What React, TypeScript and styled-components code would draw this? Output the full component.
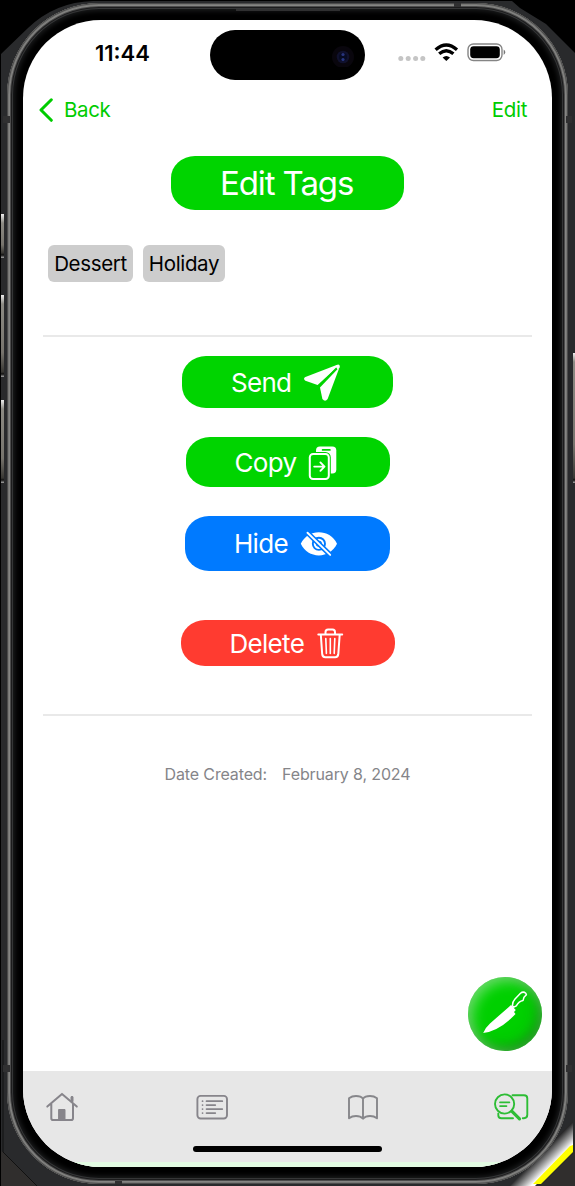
import React from "react";
import styled, { createGlobalStyle } from "styled-components";

const GREEN = "#00d400";

const GlobalStyle = createGlobalStyle`
  * { box-sizing: border-box; }
  body { margin: 0; background: #000; font-family: Inter, "Liberation Sans", sans-serif; }
`;

const Stage = styled.main`
  position: relative;
  width: 575px;
  height: 1186px;
  overflow: hidden;
  background: #000;
`;

const Backdrop = styled.svg`
  position: absolute;
  inset: 0;
`;

const Phone = styled.div`
  position: relative;
  width: 561px;
  height: 1181px;
  margin: 0 0 0 7px;
  top: 3px;
  padding: 17px 16px 16px;
  border-radius: 92px;
  background: #000;
  box-shadow:
    inset 0 0 0 1px #4b4b4b,
    inset 0 0 0 2px #777775,
    inset 0 0 0 3px #858583,
    inset 0 0 0 4px #4c4c4c,
    inset 0 0 0 5px #1c1c1d,
    inset 0 0 0 6px #353637,
    inset 0 0 5px 8px #1b1c1d;
`;

const Screen = styled.section`
  display: flex;
  flex-direction: column;
  width: 529px;
  height: 1147px;
  overflow: hidden;
  border-radius: 78px;
  background: #fff;
`;

const StatusBar = styled.header`
  display: grid;
  grid-template-columns: 187px 155px 1fr;
  align-items: start;
  height: 70px;
  padding-top: 10px;
`;

const Clock = styled.time`
  padding: 9px 0 0 72px;
  color: #000;
  font-size: 22px;
  line-height: 28px;
  font-weight: 600;
  letter-spacing: 0;
`;

const Island = styled.div`
  display: flex;
  align-items: center;
  justify-content: flex-end;
  height: 50px;
  padding-right: 10px;
  border-radius: 25px;
  background: #000;
`;

const StatusIcons = styled.div`
  display: flex;
  padding: 12px 0 0 32px;
`;

const NavBar = styled.nav`
  display: flex;
  align-items: center;
  justify-content: space-between;
  height: 40px;
  padding: 0 25px 0 16px;
`;

const NavButton = styled.button`
  display: flex;
  align-items: center;
  gap: 11px;
  padding: 0;
  border: 0;
  background: none;
  color: #00cc00;
  font: 400 20.5px/28px Inter, "Liberation Sans", sans-serif;
  letter-spacing: -0.35px;
`;

const Content = styled.div`
  display: flex;
  flex-direction: column;
  align-items: center;
  height: 941px;
  padding: 26px 20px 0;
`;

const ActionButton = styled.button<{
  $w: number;
  $h: number;
  $top?: number;
  $color?: string;
  $size?: number;
  $spacing?: number;
}>`
  display: flex;
  flex: none;
  align-items: center;
  gap: 12px;
  width: ${(p) => p.$w}px;
  height: ${(p) => p.$h}px;
  margin-top: ${(p) => p.$top ?? 0}px;
  padding: 1px 0 0 49px;
  border: 0;
  border-radius: 24px / 22px;
  background: ${(p) => p.$color ?? GREEN};
  color: #fff;
  font: 400 ${(p) => p.$size ?? 26}px/1 Inter, "Liberation Sans", sans-serif;
  letter-spacing: ${(p) => p.$spacing ?? -0.7}px;
  white-space: nowrap;
`;

const TagRow = styled.div`
  display: flex;
  align-self: stretch;
  gap: 10px;
  height: 37px;
  margin: 35px 0 53px 5px;
`;

const Tag = styled.span<{ $w: number }>`
  width: ${(p) => p.$w}px;
  border-radius: 6px;
  background: #cdcdcd;
  color: #000;
  font-size: 20.5px;
  line-height: 38px;
  letter-spacing: -0.35px;
  text-align: center;
`;

const Divider = styled.hr<{ $top?: number }>`
  flex: none;
  align-self: stretch;
  height: 2px;
  margin: ${(p) => p.$top ?? 0}px 0 0;
  border: 0;
  background: #e9e9e9;
`;

const Created = styled.p`
  display: flex;
  gap: 15px;
  margin: 47px 0 0;
  color: #858589;
  font-size: 16px;
  line-height: 22px;
  letter-spacing: -0.13px;
  white-space: nowrap;
`;

const FloatingButton = styled.button`
  position: absolute;
  left: 461px;
  top: 974px;
  width: 74px;
  height: 74px;
  padding: 0;
  border: 0;
  border-radius: 50%;
  background: #00d000;
  box-shadow:
    inset 4px 4px 13px rgba(255, 255, 255, 0.42),
    inset -4px -4px 13px rgba(50, 80, 50, 0.5);
`;

const TabBar = styled.footer`
  display: flex;
  flex-direction: column;
  flex: 1;
  border-bottom: 5px solid #e2fbe2;
  background: #e7e7e7;
`;

const Tabs = styled.div`
  display: flex;
  justify-content: space-between;
  align-items: center;
  height: 72px;
  padding: 0 21px;
`;

const HomeIndicator = styled.div`
  align-self: center;
  width: 189px;
  height: 6px;
  margin-top: 3px;
  border-radius: 3px;
  background: #000;
`;

const SideKey = styled.i<{ $x: number; $y: number; $h: number }>`
  position: absolute;
  left: ${(p) => p.$x}px;
  top: ${(p) => p.$y}px;
  width: 3px;
  height: ${(p) => p.$h}px;
  background: linear-gradient(#eee 0, #8c8a83 9px, #77746d 70%, #383733 calc(100% - 5px), #111 calc(100% - 3px), #aaa 100%);
`;

const Antenna = styled.i<{ $x: number; $y: number; $w: number; $h: number }>`
  position: absolute;
  left: ${(p) => p.$x}px;
  top: ${(p) => p.$y}px;
  width: ${(p) => p.$w}px;
  height: ${(p) => p.$h}px;
  background: #303031;
`;

const Background = () => (
  <Backdrop width="575" height="1186" viewBox="0 0 575 1186">
    <defs>
      <linearGradient id="halo" gradientUnits="userSpaceOnUse" x1="542" y1="1153" x2="553" y2="1164">
        <stop offset="0" stopColor="#29292a" />
        <stop offset="1" stopColor="#fff" />
      </linearGradient>
    </defs>
    <path d="M1 54 28 28Q55 2 93 1H512L520 8 546 24 575 53V1186H1Z" fill="#292a2c" />
    <path d="M1 1151 3 1152 37 1186H1Z" fill="#302e2d" />
    <path d="M3 1040V1152L37 1186" fill="none" stroke="#111" />
    <path d="M573 1120V1146L535 1186H510Z" fill="url(#halo)" />
    <path d="M573 1145V1152L541 1184H533L570 1146Z" fill="#ff0" />
    <path d="M575 1152V1186H541Z" fill="#302e2d" />
  </Backdrop>
);

const Camera = () => (
  <svg width="24" height="24" viewBox="0 0 24 24">
    <circle cx="12" cy="14" r="11" fill="#09060d" />
    <circle cx="12" cy="14" r="6.3" fill="#10112d" />
    <circle cx="12" cy="14" r="4" fill="#070b22" />
    <circle cx="12" cy="11.5" r="1.6" fill="#29347c" />
    <circle cx="12" cy="16.5" r="1.6" fill="#283782" />
  </svg>
);

const StatusGlyphs = () => (
  <svg width="110" height="22" viewBox="397 42 110 22">
    {[400.8, 408.2, 415.6, 422.8].map((x) => (
      <circle key={x} cx={x} cy="58.4" r="2.5" fill="#c5c5c5" />
    ))}
    <g fill="none" stroke="#000" strokeWidth="3.3">
      <path d="M435.6 49.7Q446.3 40.2 457 49.7" />
      <path d="M439.2 53.8Q446.3 47.7 453.4 53.8" />
    </g>
    <path d="M442.6 57.5Q446.3 54.3 450 57.5L446.3 61Z" />
    <rect x="468" y="44" width="34" height="16.5" rx="5.4" fill="none" stroke="#858585" strokeWidth="1.4" />
    <rect x="470.2" y="46.2" width="29.6" height="12" rx="3.4" />
    <path d="M503.7 49.5Q507 52.2 503.7 55Z" fill="#777" />
  </svg>
);

const BackChevron = () => (
  <svg width="14" height="24" viewBox="0 0 14 24">
    <path d="M12.3 1.8 2 12l10.3 10.3" fill="none" stroke="#00cc00" strokeWidth="3" strokeLinecap="round" strokeLinejoin="round" />
  </svg>
);

const SendIcon = () => (
  <svg width="38" height="38" viewBox="303 363.5 38 38" fill="#fff">
    <path d="M336.6 364.4 305.4 376.4Q302.7 378 305.4 380.2L317.6 384.4 338 366Z" />
    <path d="M339.6 366.4 327.6 398.4Q325.2 402 322.4 398.4L320 387Z" />
    <path d="M336.6 364.4Q340.6 363.2 339.6 367L337.4 368.8 334.9 366.3Z" />
    <path d="M318.2 386 336.6 367.4" stroke={GREEN} strokeWidth="1.3" />
  </svg>
);

const CopyIcon = () => (
  <svg width="30" height="36" viewBox="309 443 30 36">
    <rect x="317" y="444.4" width="20.3" height="27" rx="4" fill="#fff" />
    <path d="M323.6 447.9h7.3" stroke={GREEN} strokeWidth="1.7" strokeLinecap="round" />
    <rect x="310.8" y="452" width="19" height="25" rx="3.3" fill={GREEN} stroke={GREEN} strokeWidth="4" />
    <rect x="310.8" y="452" width="19" height="25" rx="3.3" fill={GREEN} stroke="#fff" strokeWidth="2" />
    <path d="M315.2 464.6h10.3m-4.1-4.2 4.1 4.2-4.1 4.2" fill="none" stroke="#fff" strokeWidth="1.9" strokeLinecap="round" strokeLinejoin="round" />
  </svg>
);

const HideIcon = () => (
  <svg width="38" height="28" viewBox="301 529.5 38 28">
    <path d="M301.8 543.3C305.5 535.5 312.5 531.8 319.8 531.8S334.5 535.5 338 543.3C334.3 551 327.5 554.9 319.8 554.9S305.5 551 301.8 543.3Z" fill="#fff" />
    <circle cx="319.9" cy="543.3" r="6.1" fill="#fff" stroke="#007aff" strokeWidth="1.9" />
    <circle cx="319.9" cy="543.3" r="2.3" fill="#fff" stroke="#007aff" strokeWidth="1.5" />
    <path d="m308.5 532.2 22.7 22.2" stroke="#007aff" strokeWidth="5" />
    <path d="m308.5 532.2 22.7 22.2" stroke="#fff" strokeWidth="1.9" strokeLinecap="round" />
  </svg>
);

const TrashIcon = () => (
  <svg width="28" height="32" viewBox="316 627 28 32" fill="none" stroke="#fff" strokeWidth="2" strokeLinecap="round" strokeLinejoin="round">
    <path d="M318.3 633.5H342.2M320.8 633.5 322.2 653.2Q322.5 656.2 325.3 656.2H335.2Q338 656.2 338.3 653.2L339.7 633.5M325.5 633.5V631.3Q325.5 628.6 328.1 628.6H332.5Q335 628.6 335 631.3V633.5" />
    <path d="m325.8 637.6.6 14.8M330.3 637.6V652.4M334.8 637.6l-.6 14.8" strokeWidth="1.6" />
  </svg>
);

const KnifeIcon = () => (
  <svg width="74" height="74" viewBox="468 978 74 74">
    <path d="M483.2 1034Q485 1029 490 1024.5L511 1006 515.8 1011 514 1013 515.5 1015Q500 1031.5 483.2 1034Z" fill="#fff" />
    <path d="M512.4 1006.7Q512.2 1003 515 1000L520.5 994.3Q523.2 992 525.8 994.2L526.4 995.8 524 998.2 523 1001.6Q519 1002.3 516.3 1006.8L513.8 1008.2Z" fill="none" stroke="#fff" strokeWidth="1.5" strokeLinejoin="round" />
  </svg>
);

const HomeIcon = () => (
  <svg width="36" height="32" viewBox="44 1091 36 32" fill="none" stroke="#87858b" strokeWidth="2" strokeLinecap="round" strokeLinejoin="round">
    <path d="M47.3 1106.6 62 1093.9 76.8 1106.6M51.3 1104V1118.2Q51.3 1120 53 1120H71.2Q73 1120 73 1118.2V1104M72 1102V1097" />
    <path d="M58.6 1120V1109.5H65V1120Z" fill="#87858b" strokeWidth="1" />
    <path d="M72 1101V1097.5" strokeWidth="3" />
  </svg>
);

const ListIcon = () => (
  <svg width="34" height="28" viewBox="196 1093 34 28" fill="none" stroke="#87858b" strokeWidth="1.9" strokeLinecap="round">
    <rect x="198.4" y="1095.9" width="29.6" height="22.6" rx="3.2" />
    <path d="M207.5 1101.2H223.3M207.5 1105.1H216.3M207.5 1109.1H223.3M207.5 1113.1H216.3M203.5 1101.2h.1M203.5 1105.1h.1M203.5 1109.1h.1M203.5 1113.1h.1" strokeWidth="1.7" />
  </svg>
);

const BookIcon = () => (
  <svg width="34" height="28" viewBox="344 1093 34 28" fill="none" stroke="#87878b" strokeWidth="1.9" strokeLinecap="round" strokeLinejoin="round">
    <path d="M363 1098.7Q361 1096 356 1096 352 1096 349 1098.3V1118.3Q352 1116 356 1116 360.5 1116 363 1118.7 365.5 1116 370 1116 374 1116 377 1118.3V1098.3Q374 1096 370 1096 365 1096 363 1098.7ZV1118" />
  </svg>
);

const BrowseIcon = () => (
  <svg width="38" height="30" viewBox="493 1091 38 30" fill="none" stroke="#2dbd35" strokeWidth="1.9" strokeLinecap="round" strokeLinejoin="round">
    <path d="M512.5 1094.2H524Q527.3 1094.2 527.3 1097.4V1113.8Q527.3 1117.2 524 1117.2H522.8M513 1117.2H501.5Q498.3 1117.2 498.3 1114.2V1112.5" />
    <circle cx="504.6" cy="1103" r="9.6" />
    <path d="M500 1101.3H509.4M500 1105.1H506.5" strokeWidth="1.7" />
    <path d="m512 1110.4 7.5 7.5" strokeWidth="3.2" />
  </svg>
);

export default function App() {
  return (
    <Stage>
      <GlobalStyle />
      <Background />
      <SideKey $x={1} $y={214} $h={44} />
      <SideKey $x={1} $y={295} $h={82} />
      <SideKey $x={1} $y={400} $h={83} />
      <SideKey $x={573} $y={353} $h={130} />
      <Phone>
        <Antenna $x={-4} $y={113} $w={7} $h={7} />
        <Antenna $x={-4} $y={1062} $w={7} $h={7} />
        <Antenna $x={559} $y={113} $w={6} $h={7} />
        <Antenna $x={559} $y={1062} $w={6} $h={7} />
        <Antenna $x={447} $y={0} $w={7} $h={4} />
        <Antenna $x={108} $y={1178} $w={7} $h={3} />
        <Antenna $x={229} $y={6} $w={104} $h={2} />
        <Screen>
          <StatusBar>
            <Clock>11:44</Clock>
            <Island><Camera /></Island>
            <StatusIcons><StatusGlyphs /></StatusIcons>
          </StatusBar>
          <NavBar>
            <NavButton><BackChevron />Back</NavButton>
            <NavButton>Edit</NavButton>
          </NavBar>
          <Content>
            <ActionButton $w={233} $h={54} $size={33} $spacing={-1.1}>Edit Tags</ActionButton>
            <TagRow>
              <Tag $w={85}>Dessert</Tag>
              <Tag $w={82}>Holiday</Tag>
            </TagRow>
            <Divider />
            <ActionButton $w={211} $h={52} $top={19}>Send<SendIcon /></ActionButton>
            <ActionButton $w={204} $h={50} $top={29}>Copy<CopyIcon /></ActionButton>
            <ActionButton $w={205} $h={55} $top={29} $color="#007aff">Hide<HideIcon /></ActionButton>
            <ActionButton $w={214} $h={46} $top={49} $color="#ff3b30">Delete<TrashIcon /></ActionButton>
            <Divider $top={48} />
            <Created><span>Date Created:</span><span>February 8, 2024</span></Created>
          </Content>
          <TabBar>
            <Tabs><HomeIcon /><ListIcon /><BookIcon /><BrowseIcon /></Tabs>
            <HomeIndicator />
          </TabBar>
        </Screen>
        <FloatingButton aria-label="Recipes"><KnifeIcon /></FloatingButton>
      </Phone>
    </Stage>
  );
}
